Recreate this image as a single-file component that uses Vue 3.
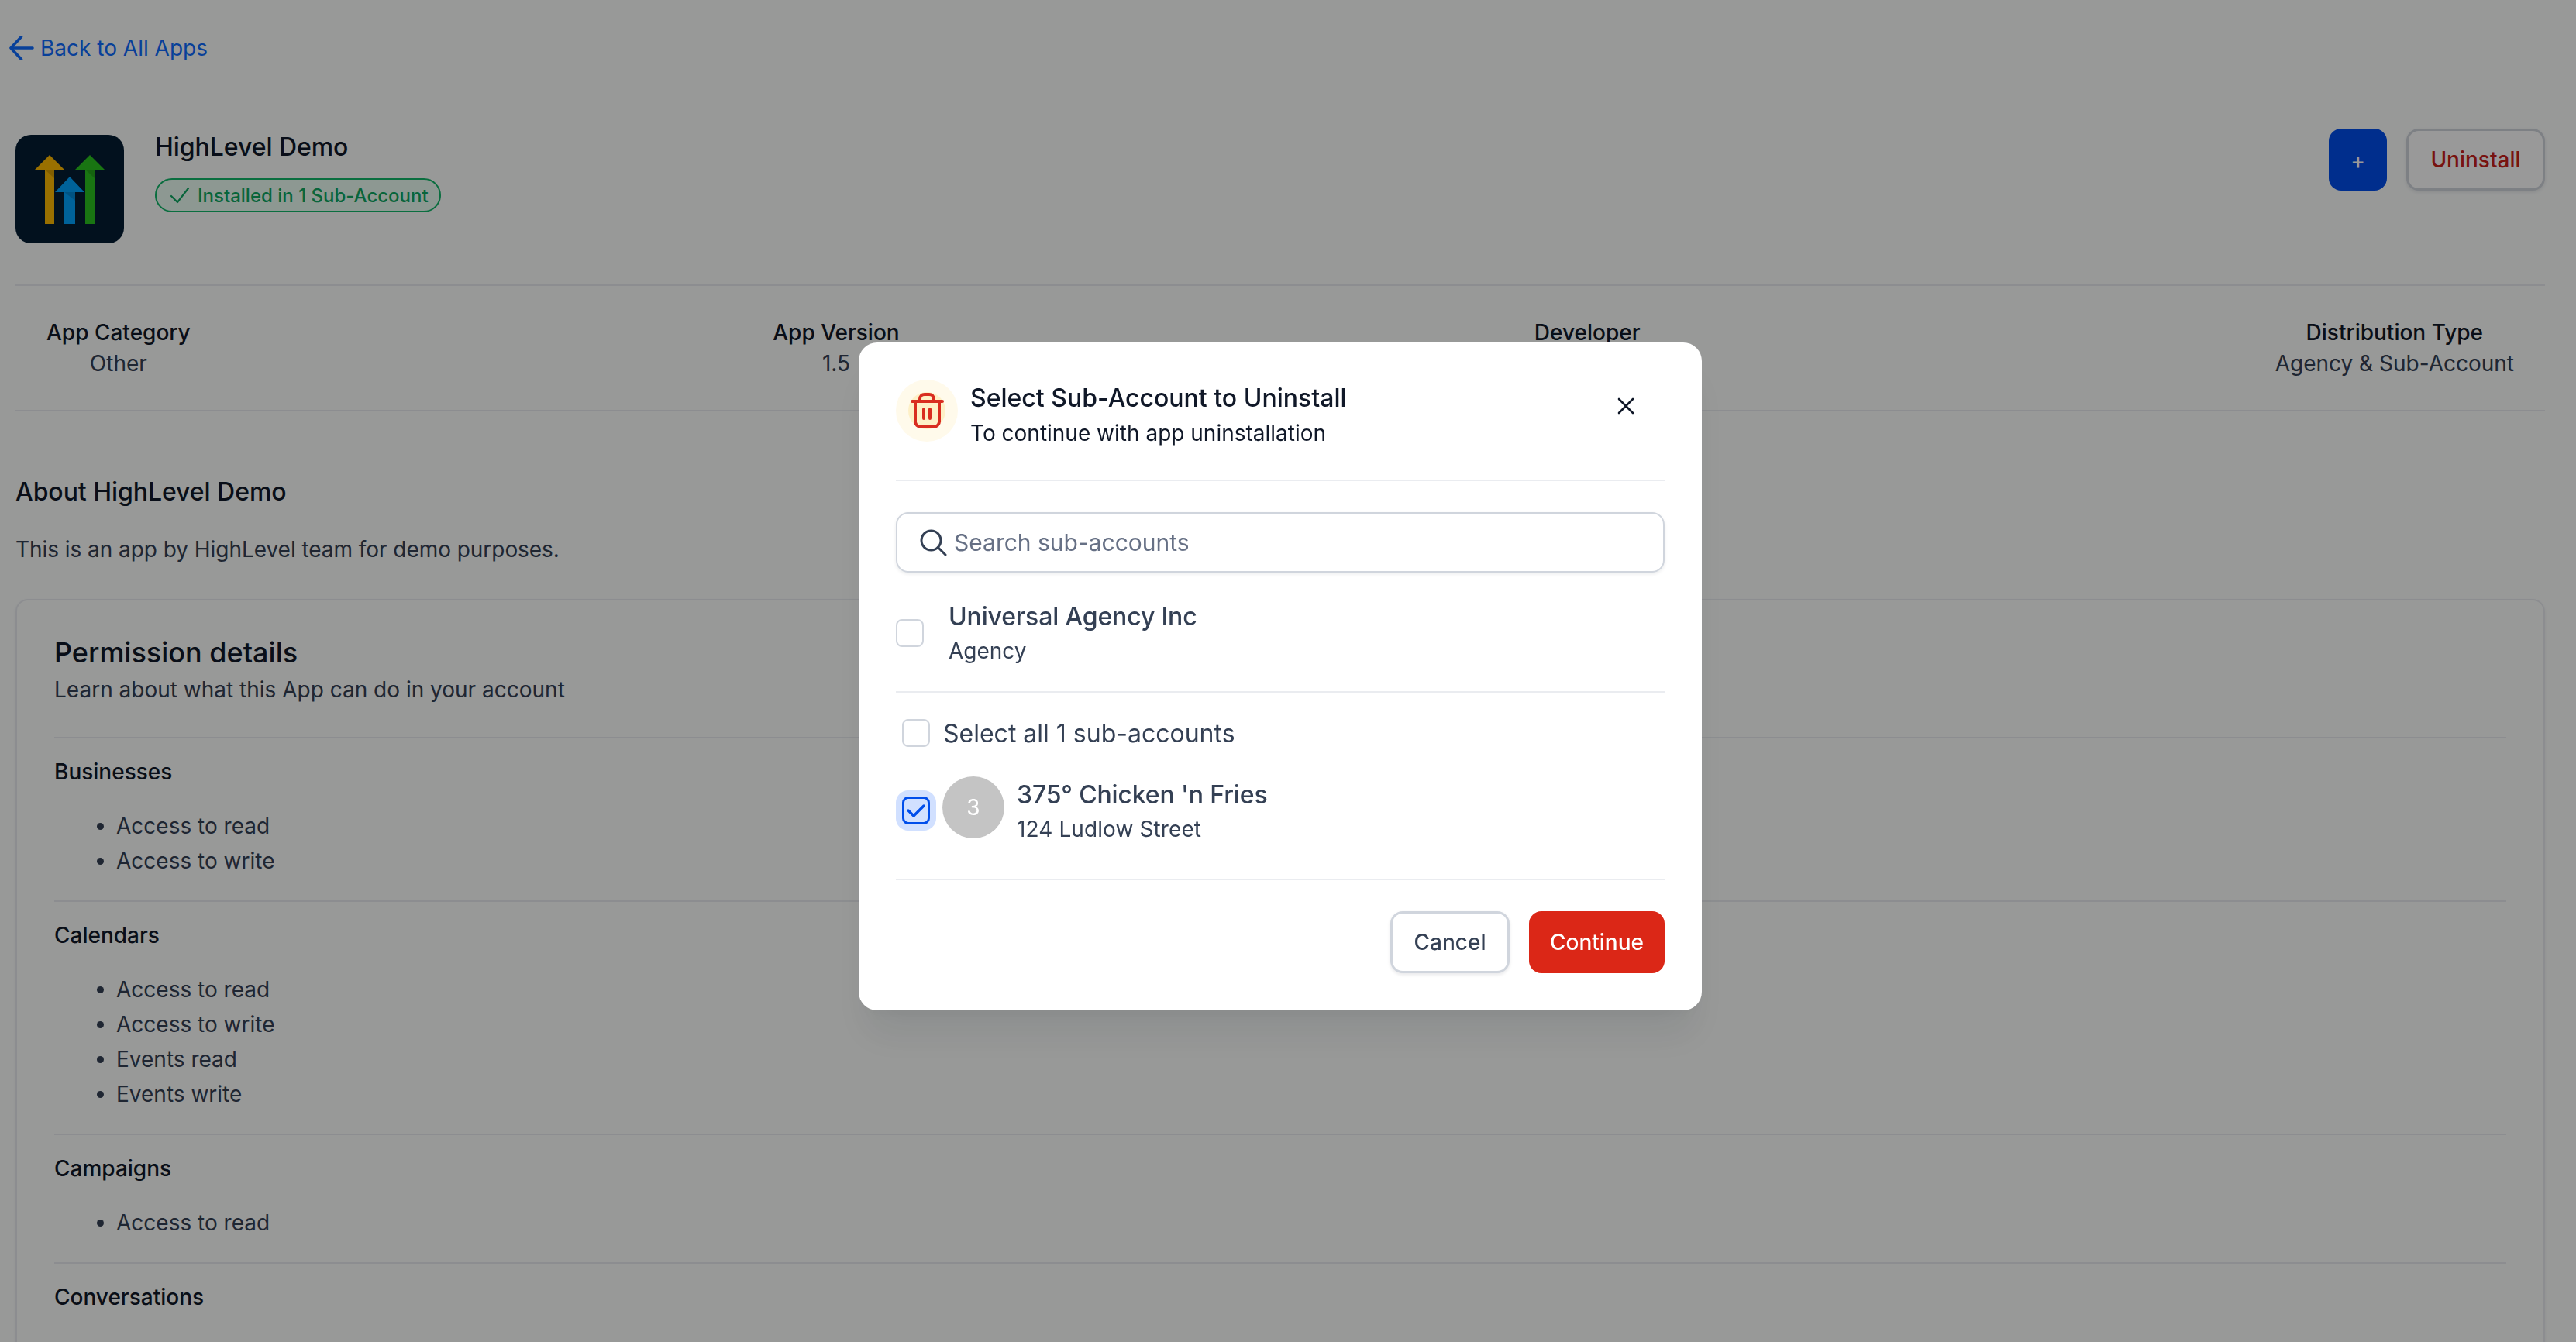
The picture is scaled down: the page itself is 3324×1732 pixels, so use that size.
<script setup>
const stats = [
  { label: 'App Category', value: 'Other' },
  { label: 'App Version', value: '1.5' },
  { label: 'Developer', value: 'HighLevel' },
  { label: 'Distribution Type', value: 'Agency & Sub-Account' },
]

const permissions = [
  { name: 'Businesses', items: ['Access to read', 'Access to write'] },
  { name: 'Calendars', items: ['Access to read', 'Access to write', 'Events read', 'Events write'] },
  { name: 'Campaigns', items: ['Access to read'] },
  { name: 'Conversations', items: [] },
]
</script>

<template>
  <div class="page">
    <a class="back">
      <svg width="32" height="32" viewBox="0 0 32 32" fill="none" stroke="currentColor" stroke-width="3.6" stroke-linecap="round" stroke-linejoin="round">
        <path d="M30 16H2M15.5 1.5 2 16l13.5 14.5" />
      </svg>
      <span>Back to All Apps</span>
    </a>

    <!-- App header -->
    <header class="app-head">
      <div class="app-info">
        <svg class="logo" width="140" height="140" viewBox="0 0 140 140">
          <rect width="140" height="140" rx="20" fill="#041d33" />
          <path d="M44 26 63 45H50V115H38V45H25Z" fill="#ffbb00" />
          <path d="M38 45H50V56Z" fill="#000" fill-opacity=".15" />
          <path d="M96 26 115 45H102V115H90V45H77Z" fill="#2bc41f" />
          <path d="M90 45H102V56Z" fill="#000" fill-opacity=".15" />
          <path d="M70 54 89 74H77V115H63V74H51Z" fill="#00a3ff" />
          <path d="M63 74H77V85Z" fill="#000" fill-opacity=".15" />
        </svg>
        <div class="app-text">
          <h1>HighLevel Demo</h1>
          <span class="badge">
            <svg width="26" height="24" viewBox="0 0 26 24" fill="none" stroke="currentColor" stroke-width="2.2" stroke-linecap="round" stroke-linejoin="round">
              <path d="M2 13l8 8L24 3" />
            </svg>
            Installed in 1 Sub-Account
          </span>
        </div>
      </div>
      <div class="app-actions">
        <button class="btn-add">+</button>
        <button class="btn-uninstall">Uninstall</button>
      </div>
    </header>

    <!-- Stats -->
    <div class="stats">
      <div v-for="stat in stats" :key="stat.label" class="stat">
        <div class="stat-label">{{ stat.label }}</div>
        <div class="stat-value">{{ stat.value }}</div>
      </div>
    </div>

    <h2 class="about-title">About HighLevel Demo</h2>
    <p class="about-text">This is an app by HighLevel team for demo purposes.</p>

    <!-- Permissions -->
    <section class="card">
      <h3>Permission details</h3>
      <p class="card-sub">Learn about what this App can do in your account</p>
      <div v-for="group in permissions" :key="group.name" class="perm">
        <div class="perm-name">{{ group.name }}</div>
        <ul v-if="group.items.length">
          <li v-for="item in group.items" :key="item">{{ item }}</li>
        </ul>
      </div>
    </section>

    <!-- Uninstall modal -->
    <div class="overlay">
      <div class="modal">
        <div class="modal-head">
          <svg class="trash" width="80" height="80" viewBox="0 0 80 80" fill="none">
            <circle cx="40" cy="40" r="40" fill="#fffaeb" />
            <circle cx="40" cy="40" r="24" fill="#fef0c7" />
            <path
              d="M21 28H60M25 28V54A7 7 0 0 0 32 61H49A7 7 0 0 0 56 54V28M31 28V25A6 6 0 0 1 37 19H43A6 6 0 0 1 49 25V28M36 38V50M44 38V50"
              stroke="#d92d20"
              stroke-width="4"
              stroke-linecap="round"
              stroke-linejoin="round"
            />
          </svg>
          <div class="modal-titles">
            <div class="modal-title">Select Sub-Account to Uninstall</div>
            <div class="modal-sub">To continue with app uninstallation</div>
          </div>
          <button class="close">
            <svg width="22" height="22" viewBox="0 0 22 22" fill="none" stroke="#101828" stroke-width="2.6" stroke-linecap="round">
              <path d="M2 2 20 20M20 2 2 20" />
            </svg>
          </button>
        </div>

        <div class="rule search-rule"></div>

        <div class="search">
          <svg width="36" height="36" viewBox="0 0 36 36" fill="none" stroke="#344054" stroke-width="3" stroke-linecap="round" stroke-linejoin="round">
            <circle cx="15.5" cy="15.5" r="12.5" />
            <path d="M34 34 24.5 24.5" />
          </svg>
          <span>Search sub-accounts</span>
        </div>

        <div class="agency">
          <span class="check"></span>
          <div>
            <div class="row-name">Universal Agency Inc</div>
            <div class="row-sub">Agency</div>
          </div>
        </div>

        <div class="rule"></div>

        <div class="select-all">
          <span class="check"></span>
          <span>Select all 1 sub-accounts</span>
        </div>

        <div class="account">
          <span class="halo">
            <span class="check checked">
              <svg width="26" height="20" viewBox="0 0 26 20" fill="none" stroke="#004eeb" stroke-width="3.4" stroke-linecap="round" stroke-linejoin="round">
                <path d="M3 10l7 7L23 4" />
              </svg>
            </span>
          </span>
          <span class="avatar">3</span>
          <div>
            <div class="row-name">375° Chicken 'n Fries</div>
            <div class="row-sub">124 Ludlow Street</div>
          </div>
        </div>

        <div class="rule footer-rule"></div>

        <div class="modal-actions">
          <button class="btn-cancel">Cancel</button>
          <button class="btn-continue">Continue</button>
        </div>
      </div>
    </div>
  </div>
</template>

<style scoped>
.page {
  height: 1732px;
  overflow: hidden;
  padding: 42px 40px 0 20px;
  box-sizing: border-box;
  background: #fdfffe;
  color: #101828;
  font-family: 'Inter', 'Liberation Sans', sans-serif;
}

button {
  font-family: inherit;
  box-sizing: border-box;
  cursor: pointer;
}

.back {
  display: flex;
  align-items: center;
  gap: 8px;
  margin-left: -8px;
  height: 40px;
  color: #0e6bff;
  font-size: 28px;
}

.app-head {
  display: flex;
  justify-content: space-between;
  align-items: flex-start;
  margin-top: 84px;
  height: 201px;
}

.app-info {
  display: flex;
  gap: 40px;
}

.logo {
  margin-top: 8px;
  display: block;
}

.app-text {
  margin-top: 4px;
}

.app-text h1 {
  margin: 0;
  font-size: 32px;
  line-height: 40px;
  font-weight: 500;
  letter-spacing: -0.05px;
}

.badge {
  display: inline-flex;
  align-items: center;
  gap: 10px;
  box-sizing: border-box;
  height: 44px;
  margin-top: 20px;
  padding: 0 14px 0 17px;
  border: 2px solid #12b76a;
  border-radius: 22px;
  background: #ecfdf3;
  color: #0ea863;
  font-size: 24px;
  font-weight: 500;
}

.app-actions {
  display: flex;
  gap: 25px;
}

.btn-add {
  width: 75px;
  height: 80px;
  border: none;
  border-radius: 16px;
  background: #004eeb;
  color: #fff;
  font-size: 28px;
  font-weight: 500;
  padding: 4px 0 0;
}

.btn-uninstall {
  width: 179px;
  height: 80px;
  border: 3px solid #d0d5dd;
  border-radius: 16px;
  background: #fff;
  color: #c8201a;
  font-size: 28px;
  font-weight: 500;
  box-shadow: 0 2px 4px rgba(16, 24, 40, 0.1);
}

.stats {
  display: flex;
  justify-content: space-between;
  padding: 40px 40px;
  border-top: 2px solid #eaecf0;
  border-bottom: 2px solid #eaecf0;
}

.stat {
  text-align: center;
}

.stat:nth-child(3) {
  min-width: 272px;
}

.stat-label {
  font-size: 28px;
  line-height: 40px;
  font-weight: 500;
}

.stat-value {
  font-size: 28px;
  line-height: 40px;
  color: #344054;
}

.about-title {
  margin: 82px 0 0;
  font-size: 32px;
  line-height: 44px;
  font-weight: 500;
  letter-spacing: -0.05px;
}

.about-text {
  margin: 32px 0 0;
  font-size: 28px;
  line-height: 40px;
  letter-spacing: -0.05px;
  color: #344054;
}

.card {
  margin-top: 44px;
  padding: 45px 48px 60px;
  border: 2px solid #eaecf0;
  border-radius: 16px;
  box-shadow: 0 2px 4px rgba(16, 24, 40, 0.06);
}

.card h3 {
  margin: 0;
  font-size: 36px;
  line-height: 44px;
  font-weight: 500;
}

.card-sub {
  margin: 6px 0 41px;
  font-size: 28px;
  line-height: 40px;
  color: #344054;
}

.perm {
  border-top: 2px solid #eaecf0;
  padding: 23px 0 28px;
}

.perm-name {
  font-size: 28px;
  line-height: 40px;
  font-weight: 500;
}

.perm ul {
  margin: 28px 0 0;
  padding-left: 80px;
}

.perm li {
  font-size: 28px;
  line-height: 45px;
  color: #344054;
}

.overlay {
  position: fixed;
  inset: 0;
  display: flex;
  align-items: center;
  justify-content: center;
  padding: 14px 20px 0 0;
  background: rgba(0, 0, 0, 0.4);
}

.modal {
  box-sizing: border-box;
  width: 1088px;
  padding: 50px 48px 48px;
  border-radius: 24px;
  background: #fff;
  box-shadow: 0 40px 48px -8px rgba(16, 24, 40, 0.08), 0 16px 16px -8px rgba(16, 24, 40, 0.03);
}

.modal-head {
  display: flex;
  align-items: flex-start;
  gap: 16px;
}

.trash {
  display: block;
  flex: none;
  margin-top: -2px;
}

.modal-titles {
  flex: 1;
}

.modal-title {
  font-size: 32px;
  line-height: 44px;
  font-weight: 500;
}

.modal-sub {
  margin-top: 3px;
  font-size: 28px;
  line-height: 40px;
}

.close {
  display: flex;
  align-items: center;
  justify-content: center;
  width: 44px;
  height: 44px;
  margin: 10px 28px 0 0;
  padding: 0;
  border: none;
  background: none;
}

.rule {
  height: 2px;
  background: #eaecf0;
}

.search-rule {
  margin-top: 40px;
}

.search {
  display: flex;
  align-items: center;
  gap: 9px;
  box-sizing: border-box;
  height: 78px;
  margin-top: 40px;
  padding: 0 28px;
  border: 2px solid #d0d5dd;
  border-radius: 16px;
  box-shadow: 0 2px 4px rgba(16, 24, 40, 0.08);
  color: #667085;
  font-size: 30px;
}

.agency {
  display: flex;
  align-items: center;
  gap: 32px;
  margin-top: 35px;
  padding-bottom: 32px;
}

.check {
  display: inline-flex;
  align-items: center;
  justify-content: center;
  flex: none;
  box-sizing: border-box;
  width: 36px;
  height: 36px;
  border: 2px solid #d0d5dd;
  border-radius: 8px;
  background: #fff;
}

.row-name {
  font-size: 32px;
  line-height: 44px;
  font-weight: 500;
  letter-spacing: -0.15px;
  color: #344054;
}

.row-sub {
  margin-top: 2px;
  font-size: 28px;
  line-height: 40px;
  color: #344054;
}

.select-all {
  display: flex;
  align-items: center;
  gap: 17px;
  height: 44px;
  margin-top: 30px;
  padding-left: 8px;
  font-size: 32px;
  color: #344054;
}

.account {
  display: flex;
  align-items: flex-start;
  margin-top: 34px;
}

.account .row-sub {
  letter-spacing: 0.1px;
}

.halo {
  display: flex;
  align-items: center;
  justify-content: center;
  flex: none;
  width: 52px;
  height: 52px;
  margin: 18px 8px 0 0;
  border-radius: 16px;
  background: #d1e0ff;
}

.check.checked {
  border: 3px solid #004eeb;
  background: #d1e0ff;
}

.avatar {
  display: flex;
  align-items: center;
  justify-content: center;
  flex: none;
  width: 80px;
  height: 80px;
  margin-right: 16px;
  border-radius: 50%;
  background: #c4c4c4;
  color: #fff;
  font-size: 28px;
}

.account .row-name {
  margin-top: 2px;
}

.footer-rule {
  margin-top: 44px;
}

.modal-actions {
  display: flex;
  justify-content: flex-end;
  gap: 25px;
  margin-top: 40px;
}

.btn-cancel,
.btn-continue {
  height: 80px;
  border-radius: 16px;
  font-size: 28px;
  font-weight: 500;
}

.btn-cancel {
  width: 154px;
  border: 3px solid #d0d5dd;
  background: #fff;
  color: #344054;
  box-shadow: 0 2px 4px rgba(16, 24, 40, 0.1);
}

.btn-continue {
  width: 175px;
  border: none;
  background: #db2717;
  color: #fff;
}
</style>

<style>
html,
body {
  margin: 0;
  overflow: hidden;
}
</style>
